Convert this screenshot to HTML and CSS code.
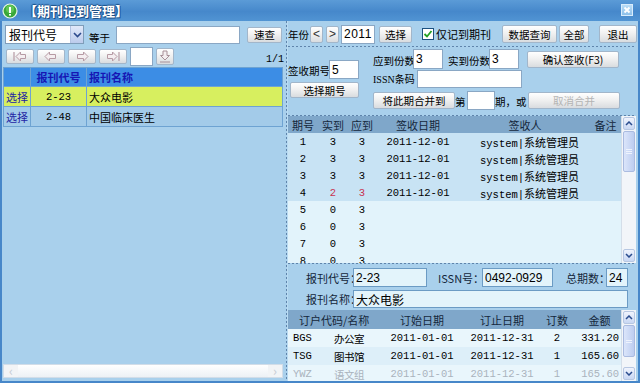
FILE: index.html
```html
<!DOCTYPE html>
<html lang="zh-CN">
<head>
    <meta charset="UTF-8">
    <title>期刊记到管理</title>
    <link rel="stylesheet" href="styles.css">
</head>
<body>
    <div class="window">
        <!-- Title bar -->
        <div class="titlebar">
            <svg class="app-icon" viewBox="0 0 16 16">
                <circle cx="8" cy="8" r="7" fill="#3aa83a" stroke="#e8f8e8" stroke-width="1.2"/>
                <circle cx="8" cy="6" r="4" fill="#7ad86a" opacity="0.6"/>
                <rect x="7" y="4" width="2" height="6" fill="#fff"/>
                <rect x="7" y="11" width="2" height="1.6" fill="#fff"/>
            </svg>
            <span class="title">【期刊记到管理】</span>
            <span class="close-btn">
                <svg viewBox="0 0 12 12" width="12" height="12"><path d="M3 3l6 6M9 3l-6 6" stroke="#fff" stroke-width="2.2"/></svg>
            </span>
        </div>

        <div class="frame">
            <!-- Left: journal list -->
            <div class="left-pane">
                <div class="search-row">
                    <div class="select">
                        <span>报刊代号</span>
                        <span class="select-arrow"><svg width="9" height="6" viewBox="0 0 9 6"><path d="M1 1l3.5 3.5L8 1" fill="none" stroke="#2c4a8c" stroke-width="1.6"/></svg></span>
                    </div>
                    <span class="lbl eq">等于</span>
                    <input type="text" class="inp search-input">
                    <button class="btn quick">速查</button>
                </div>
                <div class="nav-row">
                    <button class="btn nav"><svg width="16" height="11" viewBox="0 0 16 11"><path d="M2 1v9" stroke="#b69aa4" stroke-width="1.2"/><path d="M4 5.5l4.5-4.5v2.5h5v4h-5v2.5z" fill="#f4eef0" stroke="#b69aa4"/></svg></button>
                    <button class="btn nav"><svg width="16" height="11" viewBox="0 0 16 11"><path d="M2 5.5l4.5-4.5v2.5h6v4h-6v2.5z" fill="#f4eef0" stroke="#b69aa4"/></svg></button>
                    <button class="btn nav"><svg width="16" height="11" viewBox="0 0 16 11"><path d="M14 5.5l-4.5-4.5v2.5h-6v4h6v2.5z" fill="#f4eef0" stroke="#b69aa4"/></svg></button>
                    <button class="btn nav"><svg width="16" height="11" viewBox="0 0 16 11"><path d="M12 5.5l-4.5-4.5v2.5h-5v4h5v2.5z" fill="#f4eef0" stroke="#b69aa4"/><path d="M14 1v9" stroke="#b69aa4" stroke-width="1.2"/></svg></button>
                    <input type="text" class="inp page-input">
                    <button class="btn dl"><svg width="12" height="13" viewBox="0 0 12 13"><path d="M4 1h4v4.5h2.5l-4.5 4.5-4.5-4.5h2.5z" fill="#f4eef0" stroke="#a89098"/><path d="M1 12h10" stroke="#a89098"/></svg></button>
                    <span class="page-count">1/1</span>
                </div>
                <table class="list">
                    <colgroup><col style="width:27px"><col style="width:56px"><col></colgroup>
                    <tr><th></th><th>报刊代号</th><th class="name">报刊名称</th></tr>
                    <tr class="current"><td class="pick">选择</td><td class="code">2-23</td><td class="name">大众电影</td></tr>
                    <tr><td class="pick">选择</td><td class="code">2-48</td><td class="name">中国临床医生</td></tr>
                </table>
                <div class="hscroll">
                    <span class="hs-btn">‹</span>
                    <span class="hs-track"></span>
                    <span class="hs-btn">›</span>
                </div>
            </div>

            <div class="pane-divider"></div>

            <!-- Right: sign-in -->
            <div class="right-pane">
                <div class="top-row">
                    <span class="lbl year-lbl">年份</span>
                    <button class="btn arrow-btn">&lt;</button>
                    <button class="btn arrow-btn next">&gt;</button>
                    <input type="text" class="inp year-input" value="2011">
                    <button class="btn pick-btn">选择</button>
                    <span class="check"><svg width="10" height="10" viewBox="0 0 10 10"><path d="M1.5 5l2.5 2.5 4.5-5.5" fill="none" stroke="#22a022" stroke-width="1.8"/></svg></span>
                    <span class="lbl only-lbl">仅记到期刊</span>
                    <button class="btn query-btn">数据查询</button>
                    <button class="btn all-btn">全部</button>
                    <button class="btn exit-btn">退出</button>
                </div>
                <div class="hsep sep-top"></div>

                <div class="sign-area">
                    <div class="sign-left">
                        <div class="line">
                            <span class="lbl issue-lbl">签收期号</span>
                            <input type="text" class="inp issue-input" value="5">
                        </div>
                        <button class="btn issue-btn">选择期号</button>
                    </div>
                    <div class="sign-right">
                        <div class="line row-a">
                            <span class="lbl w40">应到份数</span>
                            <input type="text" class="inp copies" value="3">
                            <span class="lbl w41 gap5">实到份数</span>
                            <input type="text" class="inp copies" value="3">
                            <button class="btn wide-btn confirm">确认签收(F3)</button>
                        </div>
                        <div class="line row-b">
                            <span class="lbl issn-lbl">ISSN条码</span>
                            <input type="text" class="inp issn-input">
                        </div>
                        <div class="line row-c">
                            <button class="btn merge-btn">将此期合并到</button>
                            <span class="lbl di-lbl">第</span>
                            <input type="text" class="inp merge-input">
                            <span class="lbl or-lbl">期，或</span>
                            <button class="btn wide-btn" disabled>取消合并</button>
                        </div>
                    </div>
                </div>
                <div class="hsep"></div>

                <div class="grid grid-sign">
                    <div class="grid-body">
                        <table class="sign-table">
                            <colgroup><col style="width:30px"><col style="width:30px"><col style="width:28px"><col style="width:84px"><col style="width:130px"><col style="width:31px"></colgroup>
                            <tr><th>期号</th><th>实到</th><th>应到</th><th>签收日期</th><th>签收人</th><th>备注</th></tr>
                            <tr class="done"><td>1</td><td>3</td><td>3</td><td>2011-12-01</td><td class="who">system|<span class="cjk">系统管理员</span></td><td></td></tr>
                            <tr class="done"><td>2</td><td>3</td><td>3</td><td>2011-12-01</td><td class="who">system|<span class="cjk">系统管理员</span></td><td></td></tr>
                            <tr class="done"><td>3</td><td>3</td><td>3</td><td>2011-12-01</td><td class="who">system|<span class="cjk">系统管理员</span></td><td></td></tr>
                            <tr class="done"><td>4</td><td class="short">2</td><td class="short">3</td><td>2011-12-01</td><td class="who">system|<span class="cjk">系统管理员</span></td><td></td></tr>
                            <tr><td>5</td><td>0</td><td>3</td><td></td><td></td><td></td></tr>
                            <tr><td>6</td><td>0</td><td>3</td><td></td><td></td><td></td></tr>
                            <tr><td>7</td><td>0</td><td>3</td><td></td><td></td><td></td></tr>
                            <tr><td>8</td><td>0</td><td>3</td><td></td><td></td><td></td></tr>
                        </table>
                    </div>
                    <div class="vscroll">
                        <span class="sb-btn"><svg width="8" height="5" viewBox="0 0 8 5"><path d="M1 4l3-3 3 3" fill="none" stroke="#2b4d8f" stroke-width="1.5"/></svg></span>
                        <span class="sb-thumb thumb-sign"><i></i><i></i><i></i></span>
                        <span class="sb-space"></span>
                        <span class="sb-btn"><svg width="8" height="5" viewBox="0 0 8 5"><path d="M1 1l3 3 3-3" fill="none" stroke="#2b4d8f" stroke-width="1.5"/></svg></span>
                    </div>
                </div>
                <div class="hsep"></div>

                <div class="info">
                    <div class="info-row first">
                        <span class="info-lbl">报刊代号：</span>
                        <input type="text" class="info-input code-box" value="2-23">
                        <span class="info-lbl issn">ISSN号：</span>
                        <input type="text" class="info-input issn-box" value="0492-0929">
                        <span class="info-lbl total">总期数：</span>
                        <input type="text" class="info-input total-box" value="24">
                    </div>
                    <div class="info-row second">
                        <span class="info-lbl">报刊名称：</span>
                        <input type="text" class="info-input name-box" value="大众电影">
                    </div>
                </div>

                <div class="grid grid-order">
                    <div class="grid-body">
                        <table class="order-table">
                            <colgroup><col style="width:34px"><col style="width:54px"><col style="width:92px"><col style="width:68px"><col style="width:42px"><col style="width:43px"></colgroup>
                            <tr><th colspan="2" class="sub">订户代码/名称</th><th>订始日期</th><th>订止日期</th><th>订数</th><th>金额</th></tr>
                            <tr class="r1"><td class="abbr">BGS</td><td class="cjk">办公室</td><td>2011-01-01</td><td>2011-12-31</td><td>2</td><td class="amt">331.20</td></tr>
                            <tr class="r2"><td class="abbr">TSG</td><td class="cjk">图书馆</td><td>2011-01-01</td><td>2011-12-31</td><td>1</td><td class="amt">165.60</td></tr>
                            <tr class="r1 faded"><td class="abbr">YWZ</td><td class="cjk">语文组</td><td>2011-01-01</td><td>2011-12-31</td><td>1</td><td class="amt">165.60</td></tr>
                        </table>
                    </div>
                    <div class="vscroll">
                        <span class="sb-btn"><svg width="8" height="5" viewBox="0 0 8 5"><path d="M1 4l3-3 3 3" fill="none" stroke="#2b4d8f" stroke-width="1.5"/></svg></span>
                        <span class="sb-thumb thumb-order"><i></i><i></i></span>
                        <span class="sb-space"></span>
                        <span class="sb-btn"><svg width="8" height="5" viewBox="0 0 8 5"><path d="M1 1l3 3 3-3" fill="none" stroke="#2b4d8f" stroke-width="1.5"/></svg></span>
                    </div>
                </div>
            </div>
        </div>
    </div>
</body>
</html>
```

FILE: styles.css
```css
* {
    box-sizing: border-box;
}
html, body {
    margin: 0;
    padding: 0;
}
body {
    width: 640px;
    height: 383px;
    overflow: hidden;
    font-family: "Noto Sans CJK SC", "DejaVu Sans", sans-serif;
    font-size: 11px;
    color: #000;
}
input, button {
    font: inherit;
    margin: 0;
    color: inherit;
}
.window {
    width: 640px;
    height: 383px;
    display: flex;
    flex-direction: column;
    background: #a9d0ec;
}

/* title bar */
.titlebar {
    height: 21px;
    flex: none;
    display: flex;
    align-items: center;
    padding-left: 2px;
    background: linear-gradient(#5b9bd7, #4688cb 55%, #5194d3);
}
.app-icon {
    width: 16px;
    height: 16px;
}
.title {
    margin-left: 6px;
    color: #fff;
    font-size: 13px;
    font-weight: bold;
    text-shadow: 1px 1px 0 #1d4f86, -1px 0 1px #1d4f86, 0 -1px 1px #1d4f86;
}
.close-btn {
    margin-left: auto;
    margin-right: 7px;
    align-self: flex-start;
    margin-top: 4px;
    width: 12px;
    height: 12px;
    background: linear-gradient(#b9dcf6, #8cc0ea);
    border: 1px solid #d8ecfc;
    display: flex;
    align-items: center;
    justify-content: center;
}
.close-btn svg {
    width: 10px;
    height: 10px;
}

.frame {
    flex: 1;
    min-height: 0;
    display: flex;
    border: 2px solid #4787c9;
    border-top: none;
}

/* common controls */
.btn {
    padding: 0;
    border: 1px solid #a2b6ca;
    border-radius: 2px;
    background: linear-gradient(#ffffff, #f1f1f1 45%, #d9dcdf);
    display: flex;
    align-items: center;
    justify-content: center;
    font-size: 10.5px;
    white-space: nowrap;
    flex: none;
}
.btn:disabled {
    color: #b4b4b4;
}
.inp {
    padding: 0 0 0 2px;
    border: 1px solid #8aa7c4;
    background: #fff;
    font-family: "Liberation Sans", sans-serif;
    font-size: 12px;
    flex: none;
}
.lbl {
    font-size: 10.5px;
    line-height: 13px;
    white-space: nowrap;
    flex: none;
}
.hsep {
    height: 1px;
    flex: none;
    background: repeating-linear-gradient(90deg, #5f84ab 0 2px, transparent 2px 4px);
}

/* left pane */
.left-pane {
    width: 284px;
    display: flex;
    flex-direction: column;
}
.pane-divider {
    width: 2px;
    background: repeating-linear-gradient(#5f84ab 0 2px, transparent 2px 4px);
    border-right: 1px solid #b9dbf2;
}
.search-row {
    display: flex;
    align-items: center;
    height: 19px;
    margin: 4px 0 0 3px;
}
.select {
    width: 79px;
    height: 19px;
    display: flex;
    align-items: center;
    padding-left: 3px;
    background: #fff;
    border: 1px solid #7f9db9;
    font-size: 12px;
}
.select-arrow {
    margin-left: auto;
    width: 13px;
    height: 17px;
    display: flex;
    align-items: center;
    justify-content: center;
    background: linear-gradient(#e1e9f9, #bccbec);
    border-left: 1px solid #b2c2e2;
}
.eq {
    margin-left: 5px;
    align-self: flex-end;
}
.search-input {
    margin-left: 6px;
    width: 124px;
    height: 18px;
}
.quick {
    margin-left: 7px;
    width: 35px;
    height: 16px;
}
.nav-row {
    display: flex;
    align-items: center;
    height: 19px;
    margin: 3px 0 0 4px;
}
.nav {
    width: 28px;
    height: 15px;
    margin-right: 3px;
}
.page-input {
    margin-left: 0;
    width: 23px;
    height: 19px;
}
.dl {
    margin-left: 3px;
    width: 18px;
    height: 17px;
}
.page-count {
    margin-left: auto;
    margin-right: 2px;
    align-self: flex-end;
    font-family: "Liberation Mono", monospace;
    font-size: 10px;
    line-height: 12px;
}
.list {
    margin: 1px 0 0 1px;
    width: 280px;
    border-collapse: collapse;
    table-layout: fixed;
}
.list th, .list td {
    border: 1px solid #6ea3d2;
    padding: 0;
    height: 20px;
    white-space: nowrap;
}
.list th {
    height: 19px;
    background: #3c8de5;
    color: #1616b4;
    font-weight: bold;
    font-size: 11px;
}
.list tr {
    background: #a3cbe9;
}
.list tr.current {
    background: #d7ef5f;
}
.list .pick {
    text-align: center;
    color: #2424a4;
}
.list .code {
    text-align: center;
    font-family: "Liberation Mono", monospace;
    font-size: 10.5px;
}
.list .name {
    text-align: left;
    padding-left: 2px;
}
.hscroll {
    margin: auto 0 3px 1px;
    width: 280px;
    height: 14px;
    display: flex;
    background: linear-gradient(#ffffff, #edf1f5);
    border: 1px solid #d2dde8;
}
.hs-btn {
    width: 14px;
    display: flex;
    align-items: center;
    justify-content: center;
    color: #c6ccd4;
    font-size: 13px;
    line-height: 12px;
    background: #f2f4f6;
}
.hs-track {
    flex: 1;
}

/* right pane */
.right-pane {
    flex: 1;
    min-width: 0;
    display: flex;
    flex-direction: column;
    padding-right: 2px;
    overflow: hidden;
}
.top-row {
    display: flex;
    align-items: center;
    height: 20px;
    margin-top: 3px;
}
.year-lbl {
    width: 21px;
}
.arrow-btn {
    width: 13px;
    height: 17px;
    margin-left: 1px;
    font-family: "Liberation Sans", sans-serif;
    font-size: 12px;
    color: #333;
}
.arrow-btn.next {
    margin-left: 3px;
}
.year-input {
    margin-left: 2px;
    width: 34px;
    height: 19px;
    letter-spacing: 0.5px;
}
.pick-btn {
    margin-left: 4px;
    width: 33px;
    height: 17px;
}
.check {
    margin-left: 10px;
    width: 12px;
    height: 12px;
    flex: none;
    display: flex;
    align-items: center;
    justify-content: center;
    background: #fff;
    border: 1px solid #1c5180;
}
.only-lbl {
    margin-left: 2px;
    width: 66px;
    font-size: 11px;
}
.query-btn {
    width: 55px;
    height: 18px;
}
.all-btn {
    margin-left: 2px;
    width: 30px;
    height: 18px;
}
.exit-btn {
    margin-left: 10px;
    width: 38px;
    height: 18px;
}
.sep-top {
    margin-top: 2px;
}

.sign-area {
    height: 68px;
    flex: none;
    display: flex;
}
.line {
    display: flex;
    align-items: flex-end;
}
.line .lbl {
    padding-bottom: 2px;
}
.sign-left {
    width: 85px;
    padding-top: 13px;
    display: flex;
    flex-direction: column;
}
.issue-lbl {
    width: 41px;
}
.issue-input {
    width: 30px;
    height: 19px;
}
.issue-btn {
    margin: 3px 0 0 2px;
    width: 69px;
    height: 16px;
}
.sign-right {
    flex: 1;
    display: flex;
    flex-direction: column;
}
.row-a {
    margin-top: 2px;
    height: 20px;
}
.w40 {
    width: 40px;
}
.w41 {
    width: 41px;
}
.gap5 {
    margin-left: 5px;
}
.copies {
    width: 30px;
    height: 20px;
}
.wide-btn {
    width: 92px;
    height: 17px;
}
.confirm {
    margin-left: 8px;
    align-self: center;
}
.row-b {
    height: 18px;
    margin-top: 1px;
}
.issn-lbl {
    width: 44px;
    font-family: "Liberation Serif", "Noto Sans CJK SC", serif;
    font-weight: bold;
    font-size: 10px;
}
.issn-lbl {
    font-weight: normal;
}
.issn-input {
    width: 105px;
    height: 18px;
}
.row-c {
    margin-top: 3px;
    height: 19px;
    align-items: center;
}
.merge-btn {
    width: 82px;
    height: 17px;
}
.di-lbl {
    width: 12px;
    align-self: flex-end;
}
.merge-input {
    width: 28px;
    height: 19px;
}
.or-lbl {
    width: 33px;
    align-self: flex-end;
}

/* grids */
.grid {
    display: flex;
    flex: none;
}
.grid-sign {
    height: 147px;
}
.grid-order {
    flex: 1;
    min-height: 0;
    overflow: hidden;
}
.grid-body {
    flex: 1;
    overflow: hidden;
    background: #e2f3fb;
}
.grid table {
    width: 333px;
    border-collapse: collapse;
    table-layout: fixed;
}
.grid th {
    background: #7fa7ca;
    font-weight: normal;
    font-size: 11px;
    color: #15283c;
    padding: 0;
    white-space: nowrap;
}
.grid td {
    padding: 0;
    text-align: center;
    font-family: "Liberation Mono", monospace;
    font-size: 10.5px;
    white-space: nowrap;
}
.sign-table th {
    height: 17px;
}
.sign-table td {
    height: 17px;
}
.sign-table tr.done td {
    background: #c8e3f4;
}
.sign-table td.short {
    color: #c83250;
}
.sign-table td.who {
    text-align: left;
    padding-left: 20px;
}
.cjk {
    font-family: "Noto Sans CJK SC", sans-serif;
    font-size: 11px;
}
.order-table th {
    height: 19px;
}
.order-table th.sub {
    text-align: left;
    padding-left: 11px;
}
.order-table td {
    height: 18px;
}
.order-table tr.r1 td {
    background: #e9f6fc;
}
.order-table tr.r2 td {
    background: #ddeff9;
}
.order-table tr.faded td {
    color: #a9b3bd;
}
.order-table td.abbr {
    text-align: left;
    padding-left: 5px;
}
.order-table td.amt {
    text-align: right;
    padding-right: 2px;
}

.vscroll {
    width: 15px;
    flex: none;
    display: flex;
    flex-direction: column;
    padding: 1px 0;
    background: #f2f5f9;
    border-left: 1px solid #d4dee9;
}
.sb-btn {
    height: 13px;
    margin: 0 1px;
    display: flex;
    align-items: center;
    justify-content: center;
    border: 1px solid #b7c7e2;
    border-radius: 2px;
    background: linear-gradient(#f0f4fd, #c9d7f3);
}
.sb-thumb {
    margin: 1px 1px 0;
    display: flex;
    flex-direction: column;
    align-items: center;
    justify-content: center;
    gap: 1px;
    border: 1px solid #aabbe0;
    border-radius: 2px;
    background: linear-gradient(90deg, #dbe5fa, #bdcdf0);
}
.sb-thumb i {
    width: 6px;
    height: 1px;
    background: #eef3fd;
}
.thumb-sign {
    height: 41px;
}
.thumb-order {
    height: 32px;
}
.sb-space {
    flex: 1;
}

/* info area */
.info {
    height: 46px;
    flex: none;
    display: flex;
    flex-direction: column;
    padding-left: 18px;
}
.info-row {
    display: flex;
    align-items: center;
}
.info-row.first {
    margin-top: 4px;
    height: 19px;
}
.info-row.second {
    margin-top: 3px;
    height: 18px;
}
.info-lbl {
    width: 47px;
    font-size: 11px;
    color: #13263a;
    white-space: nowrap;
    flex: none;
}
.info-lbl.issn {
    margin-left: 11px;
    width: 44px;
}
.info-lbl.total {
    margin-left: 13px;
    width: 40px;
}
.info-input {
    height: 19px;
    padding: 0 0 0 2px;
    border: 1px solid #6b9bc4;
    background: #e3f4fb;
    font-family: "Liberation Sans", sans-serif;
    font-size: 12px;
    flex: none;
}
.code-box {
    width: 74px;
}
.issn-box {
    width: 71px;
}
.total-box {
    width: 22px;
}
.name-box {
    width: 275px;
    height: 18px;
    font-family: "Noto Sans CJK SC", sans-serif;
}
```
